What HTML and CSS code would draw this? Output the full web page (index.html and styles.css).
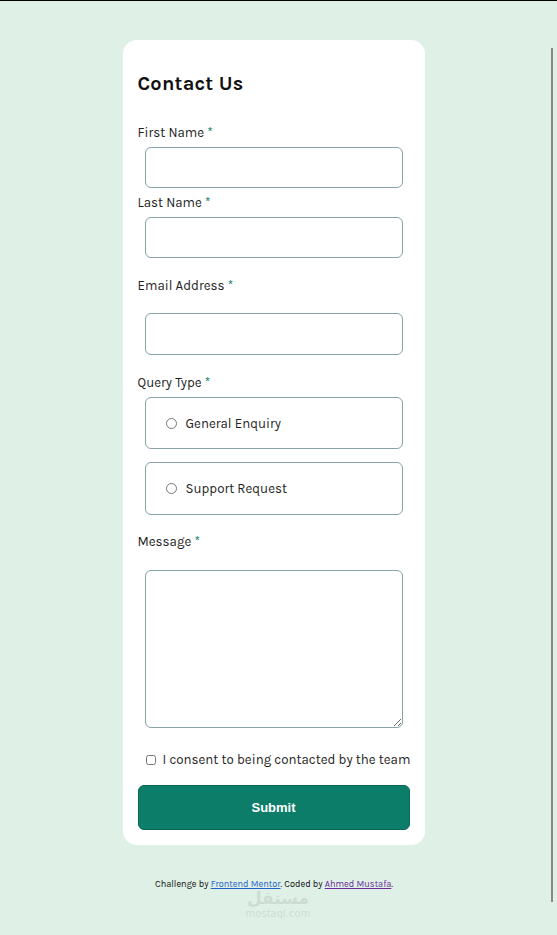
FILE: index.html
```
<!DOCTYPE html>
<html lang="en">
<head>
<meta charset="utf-8">
<title>Contact Us</title>
<link rel="stylesheet" href="styles.css">
</head>
<body>
<main class="page">
  <form class="card">
    <h1 class="title">Contact Us</h1>
    <label class="label first">First Name <span class="req">*</span></label>
    <input class="field" type="text">
    <label class="label tight">Last Name <span class="req">*</span></label>
    <input class="field" type="text">
    <label class="label">Email Address <span class="req">*</span></label>
    <input class="field email" type="email">
    <label class="label query">Query Type <span class="req">*</span></label>
    <label class="option"><input type="radio" name="q" class="radio"><span>General Enquiry</span></label>
    <label class="option second"><input type="radio" name="q" class="radio"><span>Support Request</span></label>
    <label class="label msg">Message <span class="req">*</span></label>
    <textarea class="area"></textarea>
    <label class="consent"><input type="checkbox" class="check"><span>I consent to being contacted by the team</span></label>
    <button type="button" class="submit">Submit</button>
  </form>
  <footer class="attribution">Challenge by <a href="#" class="fm">Frontend Mentor</a>. Coded by <a href="#" class="me">Ahmed Mustafa</a>.</footer>
</main>
<div class="rail"></div>
<div class="mark"><div class="mark-ar">مستقل</div><div class="mark-en">mostaql.com</div></div>
</body>
</html>
```
FILE: styles.css
```
html {
  border-top: 1px solid #000;
  background: #dff0e6;
}
body {
  margin: 0;
  font-family: "Karla", "Inter", "Liberation Sans", sans-serif;
  color: #1a1a1a;
  min-height: 934px;
  background: #dff0e6;
}
.page {
  display: flex;
  flex-direction: column;
  align-items: center;
  padding-top: 39px;
}
.card {
  width: 272px;
  background: #fff;
  border-radius: 14px;
  padding: 32px 15px 15px;
  display: flex;
  flex-direction: column;
  margin-left: -10px;
}
.title {
  margin: 0;
  font-size: 20px;
  line-height: 24px;
  font-weight: 700;
  color: #111;
  letter-spacing: 0.2px;
}
.label {
  display: block;
  font-size: 13.3px;
  line-height: 16px;
  margin-top: 20px;
  color: #1e1e1e;
}
.label.first { margin-top: 29px; }
.label.tight { margin-top: 7px; }
.label.query { margin-top: 20px; }
.label.msg { margin-top: 19px; }
.req { color: #0c7d69; }
.field {
  box-sizing: border-box;
  width: 258px;
  height: 41px;
  margin: 6px 0 0 7px;
  border: 1px solid #87a3a6;
  border-radius: 6px;
  background: #fff;
  padding: 0 10px;
}
.field.email { margin-top: 19px; height: 42px; }
.option {
  box-sizing: border-box;
  width: 258px;
  height: 52px;
  margin: 6px 0 0 7px;
  border: 1px solid #87a3a6;
  border-radius: 6px;
  display: flex;
  align-items: center;
  padding-left: 17px;
  font-size: 13.3px;
  color: #1e1e1e;
}
.option.second { margin-top: 13px; height: 53px; }
.radio {
  width: 11px;
  height: 11px;
  margin: 0 9px 0 3px;
  accent-color: #0c7d69;
}
.area {
  box-sizing: border-box;
  width: 258px;
  height: 158px;
  margin: 20px 0 0 7px;
  border: 1px solid #87a3a6;
  border-radius: 6px;
  resize: vertical;
  font-family: inherit;
}
.consent {
  display: flex;
  align-items: center;
  margin-top: 24px;
  font-size: 13.3px;
  line-height: 16px;
  color: #1e1e1e;
  white-space: nowrap;
}
.check {
  width: 10px;
  height: 10px;
  margin: 0 7px 0 8px;
}
.submit {
  margin-top: 17px;
  height: 45px;
  border: 1px solid #0a6657;
  border-radius: 6px;
  background: #0c7d69;
  color: #fff;
  font-family: "Liberation Sans", sans-serif;
  font-size: 13px;
  font-weight: 700;
}
.attribution {
  margin-top: 33px;
  font-size: 9.2px;
  line-height: 12px;
  color: #111;
  margin-left: -9px;
}
.fm { color: #1f63c9; }
.me { color: #6a2a9c; }
.rail {
  position: absolute;
  left: 551px;
  top: 48px;
  width: 2px;
  height: 854px;
  background: #888;
}
.mark {
  position: absolute;
  left: 228px;
  top: 889px;
  width: 100px;
  text-align: center;
  color: rgba(160, 170, 165, 0.3);
  pointer-events: none;
}
.mark-ar {
  font-family: "DejaVu Sans", sans-serif;
  font-weight: 700;
  font-size: 17px;
  line-height: 19px;
}
.mark-en {
  font-family: "DejaVu Sans", sans-serif;
  font-size: 10px;
  line-height: 12px;
}
```
